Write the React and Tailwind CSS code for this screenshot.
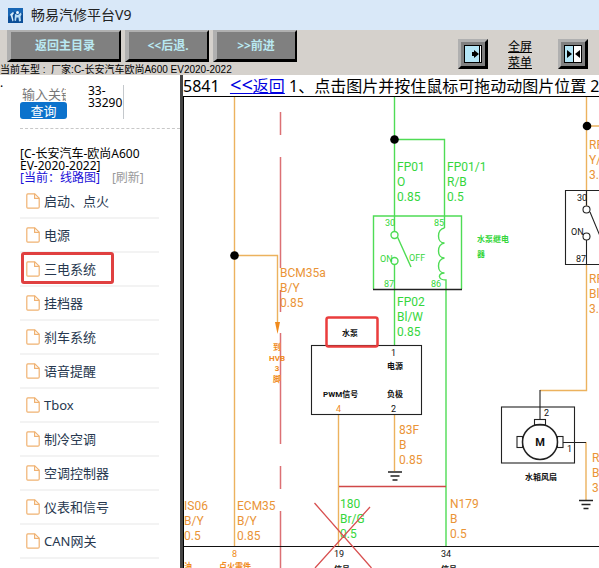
const menuItems = [
  { label: '启动、点火' },
  { label: '电源' },
  { label: '三电系统', marked: true },
  { label: '挂档器' },
  { label: '刹车系统' },
  { label: '语音提醒' },
  { label: 'Tbox' },
  { label: '制冷空调' },
  { label: '空调控制器' },
  { label: '仪表和信号' },
  { label: 'CAN网关' }
];

const navButtons = [
  { label: '返回主目录', width: 'w-[114px]' },
  { label: '<<后退.', width: 'w-[84px]' },
  { label: '>>前进', width: 'w-[84px]' }
];

// wire labels: first baseline, 15px between lines
const wireLabels = [
  { x: 280, y: 277, fill: '#ea9436', lines: ['BCM35a', 'B/Y', '0.85'] },
  { x: 397, y: 171, fill: '#35d63c', lines: ['FP01', 'O', '0.85'] },
  { x: 447, y: 171, fill: '#35d63c', lines: ['FP01/1', 'R/B', '0.5'] },
  { x: 397, y: 306, fill: '#35d63c', lines: ['FP02', 'Bl/W', '0.85'] },
  { x: 399, y: 434, fill: '#ea9436', lines: ['83F', 'B', '0.85'] },
  { x: 450, y: 508, fill: '#ea9436', lines: ['N179', 'B', '0.5'] },
  { x: 340, y: 508, fill: '#35d63c', lines: ['180', 'Br/G', '0.5'] },
  { x: 184, y: 510, fill: '#ea9436', lines: ['IS06', 'B/Y', '0.5'] },
  { x: 237, y: 510, fill: '#ea9436', lines: ['ECM35', 'B/Y', '0.85'] },
  { x: 589, y: 149, fill: '#ea9436', lines: ['RF', 'Y/', '3.0'] },
  { x: 589, y: 283, fill: '#ea9436', lines: ['RF', 'Bl', '3.0'] },
  { x: 592, y: 462, fill: '#ea9436', lines: ['RF', 'B', '3.0'] }
];

const FileIcon = () => (
  <svg width="14" height="16" viewBox="0 0 14 16" fill="none" stroke="#f0b272" strokeWidth="1.2" strokeLinejoin="round" className="shrink-0">
    <path d="M1.8 0.8h7l4.4 4.4v8.8a1.2 1.2 0 0 1-1.2 1.2H1.8a1.2 1.2 0 0 1-1-1.2V2a1.2 1.2 0 0 1 1-1.2z" />
    <path d="M8.6 0.8v4.6h4.6" />
  </svg>
);

const Ground = ({ x, y }) => (
  <path d={`M${x - 7} ${y}h14M${x - 4.5} ${y + 4}h9M${x - 2.5} ${y + 8}h5`} stroke="#222" strokeWidth="1.3" />
);

const Diagram = () => (
  <svg width="415" height="471" viewBox="184 97 415 471" fill="none" className="block max-w-none shrink-0" role="img" aria-label="线路图">
    <g stroke="#ecb25e" strokeWidth="1.4">
      <path d="M234.5 97V546M234.5 255.5H277.5V324" />
      <path d="M586.5 97V206M586.5 126H600M586.5 264V390.5H540M586 442V500" />
      <path d="M338.5 414V546M394.5 414V471" />
    </g>
    <path d="M275 322h5l-2.5 12z" fill="#f08a1c" />
    <path d="M280.5 112V135M280.5 157V268M280.5 290V312M280.5 333V444M280.5 466V489M280.5 511V568" stroke="#dc7074" strokeWidth="1.5" />

    {/* pump relay */}
    <g stroke="#4fdc55" strokeWidth="1.4">
      <path d="M394.5 97V231.5M394.5 139.5H444.5V228M373.5 289V216H461.5V289" />
      <circle cx="394.5" cy="235" r="3.5" />
      <circle cx="394.5" cy="261" r="3.5" />
      <path d="M397.5 237L411 267M394.5 264.5V345" />
      <path d="M444.5 228c-8 1-8 15 0 15c-8 1-8 15 0 15c-8 1-8 15 0 15c-7 0-7 7 1.5 7V546" />
    </g>
    <path d="M373 289.5H462" stroke="#222" strokeWidth="1.3" />

    <g stroke="#222" strokeWidth="1.1">
      <path d="M600 190.5H565.5V264.5H600M586.5 190V205.5M590 212L600 236M586.5 240V264" />
      <circle cx="586.5" cy="209.5" r="3.5" />
      <circle cx="586.5" cy="236.5" r="3.5" />
      <rect x="311.5" y="345.5" width="110" height="69" />
      <rect x="501.5" y="407" width="73" height="56" />
      <path d="M540 390V419M563 442.5H586" />
      <circle cx="540" cy="442" r="17.5" strokeWidth="1.5" />
      <rect x="534.5" y="419.5" width="11" height="5.5" />
      <rect x="517" y="436.5" width="5.5" height="11" />
      <rect x="557.5" y="436.5" width="5.5" height="11" />
    </g>
    <path d="M184 546.5H599" stroke="#111" strokeWidth="1.2" />
    <Ground x={395} y={472} />
    <Ground x={586} y={500.5} />
    <g fill="#000">
      <circle cx="234.5" cy="255.5" r="4.3" />
      <circle cx="394.5" cy="139.5" r="4.3" />
      <circle cx="587" cy="126" r="4.3" />
    </g>

    <g fontFamily="Roboto, 'Liberation Sans', sans-serif" fontSize="12">
      {wireLabels.map((label) => (
        <text key={`${label.x}-${label.y}`} fill={label.fill}>
          {label.lines.map((line, i) => (
            <tspan key={i} x={label.x} y={label.y + i * 15}>{line}</tspan>
          ))}
        </text>
      ))}
    </g>

    <g fontFamily="Roboto, 'Liberation Sans', sans-serif" fontSize="9" fill="#35d63c">
      <text x="385" y="226">30</text>
      <text x="434" y="226">85</text>
      <text x="380" y="262">ON</text>
      <text x="409" y="261">OFF</text>
      <text x="384" y="287">87</text>
      <text x="431" y="287">86</text>
    </g>
    <g fontFamily="Roboto, 'Liberation Sans', sans-serif" fontSize="9" fill="#111">
      <text x="577" y="201">30</text>
      <text x="571" y="235">ON</text>
      <text x="576" y="262">87</text>
      <text x="391" y="356">1</text>
      <text x="391" y="412">2</text>
      <text x="544" y="416">2</text>
      <text x="567" y="452">1</text>
      <text x="334" y="557">19</text>
      <text x="441" y="557">34</text>
      <text x="336" y="412" fill="#ee8a20">4</text>
      <text x="232" y="557" fill="#ee8a20">8</text>
      <text x="540" y="446" fontSize="11" fontWeight="bold" textAnchor="middle">M</text>
    </g>
    <g fontFamily="Roboto, 'Noto Sans CJK SC', sans-serif" fontSize="8" fontWeight="bold" fill="#111">
      <text x="342" y="336">水泵</text>
      <text x="387" y="369">电源</text>
      <text x="387" y="397">负极</text>
      <text x="323" y="397">PWM信号</text>
      <text x="525" y="480">水箱风扇</text>
      <text x="477" y="242" fill="#35d63c">水泵继电</text>
      <text x="477" y="257" fill="#35d63c">器</text>
      <g fill="#f08a1c" textAnchor="middle">
        <text x="277" y="350">到</text>
        <text x="277" y="361">HVB</text>
        <text x="277" y="371">3</text>
        <text x="277" y="382">脚</text>
        <text x="235" y="569">点火零件</text>
        <text x="188" y="569">油</text>
      </g>
      <text x="334" y="572">信号</text>
      <text x="441" y="572">信号</text>
    </g>

    <path d="M339 486.5H446" stroke="#d04848" strokeWidth="1.3" />
    <path d="M314.5 503L371.5 568M370 507L315 568" stroke="#d85050" strokeWidth="1.3" />
    <rect x="326.5" y="317.5" width="51" height="29" rx="2" stroke="#ea3d3d" strokeWidth="2.5" />
  </svg>
);

const App = () => {
  return (
    <div className="flex h-screen flex-col overflow-hidden bg-white font-['Noto_Sans','Noto_Sans_CJK_SC',sans-serif] text-black">
      <header className="flex h-[30px] shrink-0 items-center gap-2 bg-[#d9e8f8] px-2">
        <svg width="15" height="15" viewBox="0 0 15 15">
          <rect width="15" height="15" fill="#0c4f98" />
          <path d="M0 0h15v5L6 4 0 9z" fill="#1766b4" />
          <path d="M2 6.5l3-2.5 1 1-1.5 2.5 1 5-1 1-1.5-5z" fill="#d8edfa" />
          <path d="M7 6l3 1 3-2.5.5 2-1 2 .5 4.500-2 .5-.5-4H8.500L8 13l-1.5-.5z" fill="#b7dcf5" />
          <circle cx="9.5" cy="4.5" r="1.5" fill="#e8f6ff" />
        </svg>
        <h1 className="text-[14px] leading-5 text-[#222]">畅易汽修平台V9</h1>
      </header>

      <div className="flex h-[45px] shrink-0 justify-between bg-[#d5d1cc]">
        <div className="flex flex-col">
          <nav className="flex gap-1 pl-[7px]">
            {navButtons.map((button) => (
              <button key={button.label} type="button" className={`${button.width} h-8 border-t-2 border-r-2 border-b-3 border-l-4 border-t-[#b0b0b0] border-r-black border-b-black border-l-[#b0b0b0] bg-[#808080] text-center text-[12px] leading-4 font-bold text-[#b9e9f2]`}>
                {button.label}
              </button>
            ))}
          </nav>
          <p className="h-[13px] overflow-hidden font-['Liberation_Sans','Noto_Sans_CJK_SC',sans-serif] text-[10px] leading-4 whitespace-pre">当前车型 :  厂家:C-长安汽车欧尚A600 EV2020-2022</p>
        </div>
        <div className="flex items-start pt-[9px] pr-[11px]">
          <button type="button" aria-label="展开" className="flex size-[30px] items-center justify-center border-3 border-t-[#b0b0b0] border-r-black border-b-black border-l-[#b0b0b0] bg-[#808080]">
            <svg width="18" height="18" viewBox="0 0 18 18">
              <rect x="0.5" y="0.5" width="17" height="17" fill="#b5e6f7" stroke="#000" />
              <path d="M15 1h2v16h-2z" fill="#fff" />
              <path d="M15.5 1v16" stroke="#000" />
              <path d="M8 7h2V5l5 4-5 4v-2H8z" fill="#000" />
            </svg>
          </button>
          <a href="#fullscreen" className="mr-[26px] ml-5 w-6 text-[12px] leading-4 underline">全屏菜单</a>
          <button type="button" aria-label="收起" className="flex size-[30px] items-center justify-center border-3 border-t-[#b0b0b0] border-r-black border-b-black border-l-[#b0b0b0] bg-[#808080]">
            <svg width="18" height="18" viewBox="0 0 18 18">
              <rect x="0.5" y="0.5" width="17" height="17" fill="#b5e6f7" stroke="#000" />
              <path d="M10 1h7v16h-7z" fill="#fff" />
              <path d="M9.5 1v16" stroke="#000" />
              <path d="M3 5l5 4-5 4zM16 5l-5 4 5 4z" fill="#000" />
            </svg>
          </button>
        </div>
      </div>

      <div className="flex min-h-0 flex-1">
        <aside className="flex w-[183px] shrink-0 border-r-3 border-[#444]">
          <span className="w-5 shrink-0 text-[12px] leading-4">.</span>
          <div className="min-w-0 flex-1">
            <form className="flex border-b border-dashed border-[#c8c8c8] pt-[10px] pb-[9px]" onSubmit={(e) => e.preventDefault()}>
              <div className="w-[47px]">
                <input aria-label="关键字" placeholder="输入关键字" className="block h-[17px] w-[46px] pl-[2px] text-[13px] leading-4 placeholder:text-[#777]" />
                <button type="submit" className="block h-[17px] w-full rounded-[3px] bg-[#0c72cc] text-center text-[13px] leading-4 text-white">查询</button>
              </div>
              <p className="ml-[21px] w-9 border-r border-[#c4c8cc] text-[12px] leading-3">33-33290</p>
            </form>
            <div className="pt-[19px] text-[12px] leading-3">
              <p>[C-长安汽车-欧尚A600</p>
              <p>EV-2020-2022]</p>
              <p className="flex gap-3">
                <a href="#current" className="text-[#1a10d8]">[当前：线路图]</a>
                <a href="#refresh" className="text-[#999]">[刷新]</a>
              </p>
            </div>
            <ul className="mt-px mr-[21px]">
              {menuItems.map((item) => (
                <li key={item.label} className="relative h-[34px] border-b-2 border-[#f3f3f3]">
                  <a href="#menu" className="flex h-full items-center gap-1 pl-[6px] text-[13px] leading-4 text-[#27384f]">
                    <FileIcon />
                    {item.label}
                  </a>
                  {item.marked && <span className="absolute -top-px left-px h-8 w-[93px] rounded-[3px] border-3 border-[#e04040]" />}
                </li>
              ))}
            </ul>
          </div>
        </aside>

        <main className="flex min-w-0 flex-1 flex-col">
          <p className="h-[21px] shrink-0 overflow-hidden text-[16px] leading-[22px] whitespace-pre">
            5841  <a href="#back" className="ml-[2px] text-[#0000e0] underline"><span className="text-[20px] leading-4">&lt;&lt;</span>返回</a> 1、点击图片并按住鼠标可拖动动图片位置 2、滚动鼠标滚轮可缩放图片
          </p>
          <div className="min-h-0 flex-1 overflow-hidden border-t border-l border-black">
            <Diagram />
          </div>
        </main>
      </div>
    </div>
  );
};

export default App;
